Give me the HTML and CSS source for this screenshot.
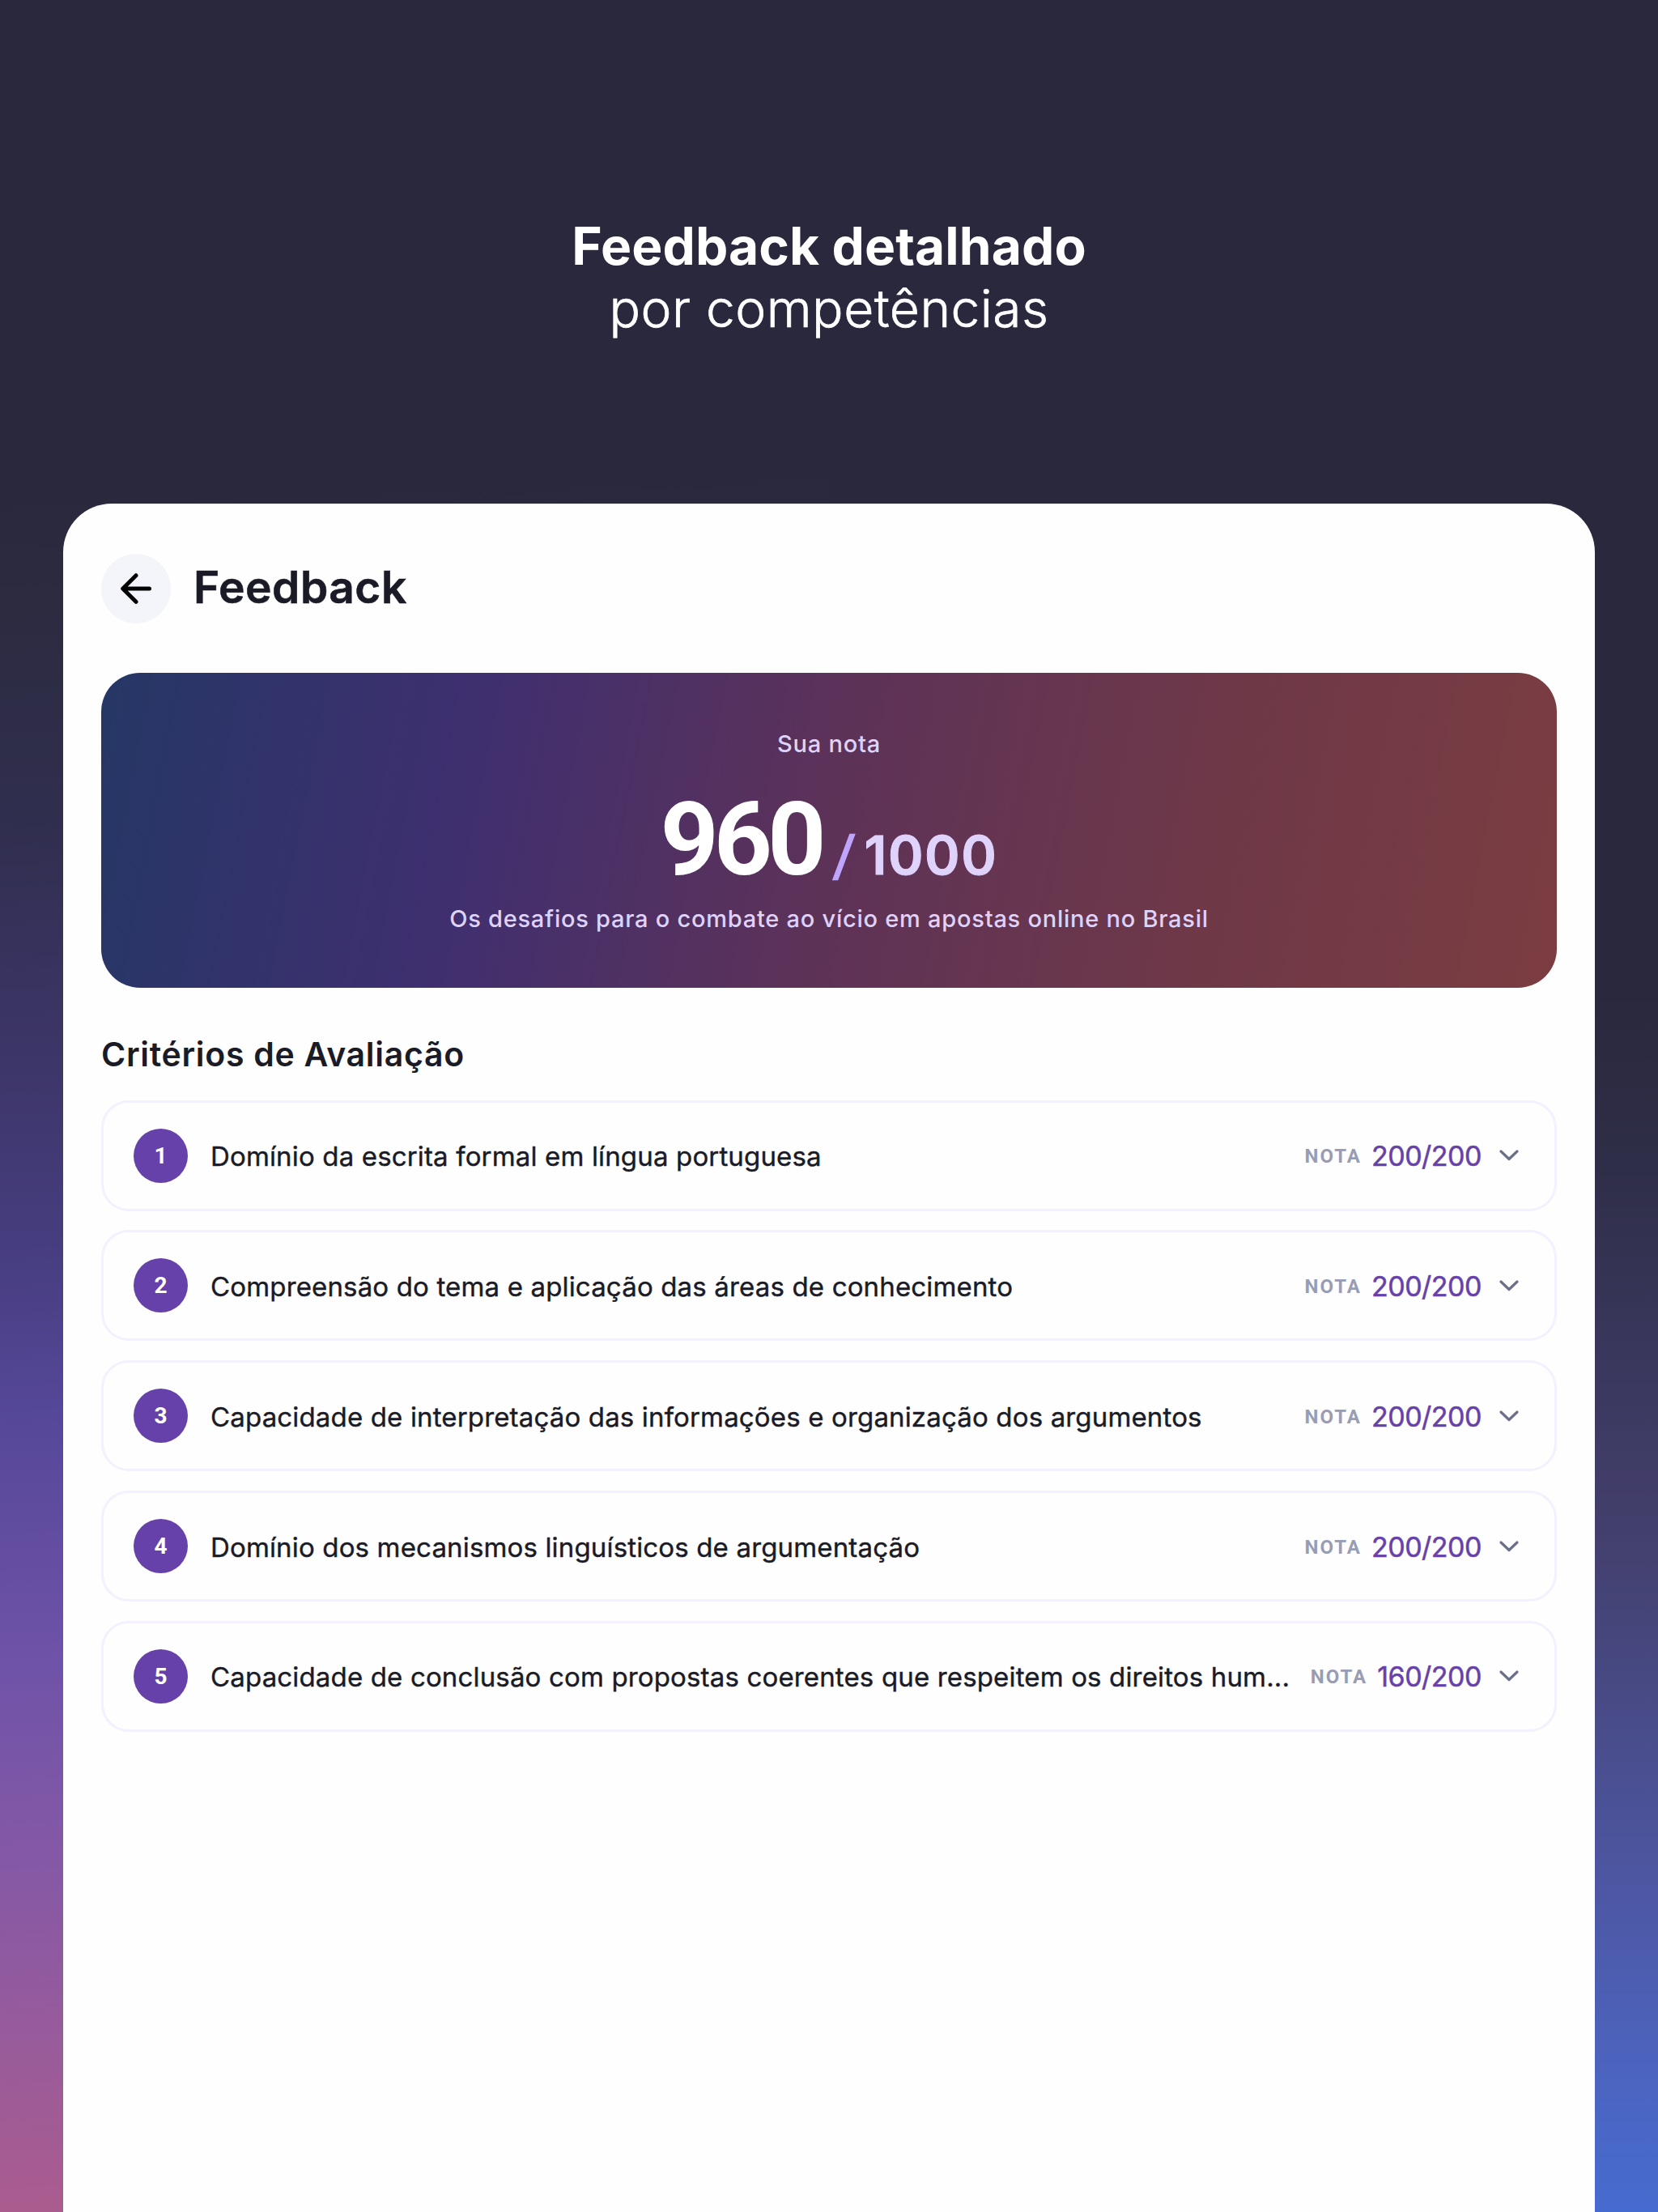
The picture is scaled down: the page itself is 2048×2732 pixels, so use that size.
FILE: index.html
```html
<!DOCTYPE html>
<html lang="pt-BR">
<head>
<meta charset="utf-8">
<title>Feedback</title>
<link rel="stylesheet" href="styles.css">
</head>
<body>
<header class="headline"><strong>Feedback detalhado</strong><span>por competências</span></header>
<main class="sheet">
  <div class="topbar">
    <button class="back" aria-label="Voltar"><svg width="38" height="38" viewBox="0 0 38 38"><path d="M35.5 19H3M19 2.7 2.7 19 19 35.3"/></svg></button>
    <h1>Feedback</h1>
  </div>
  <section class="hero">
    <p class="label">Sua nota</p>
    <div class="score"><b>960</b><i>/</i><span>1000</span></div>
    <p class="theme">Os desafios para o combate ao vício em apostas online no Brasil</p>
  </section>
  <h2>Critérios de Avaliação</h2>
  <div class="list">
    <article class="item"><span class="num">1</span><span class="name">Domínio da escrita formal em língua portuguesa</span><span class="nota">NOTA</span><span class="points">200/200</span><svg class="chev" width="24" height="14" viewBox="0 0 24 14"><path d="M2 2l10 9.5L22 2"/></svg></article>
    <article class="item"><span class="num">2</span><span class="name">Compreensão do tema e aplicação das áreas de conhecimento</span><span class="nota">NOTA</span><span class="points">200/200</span><svg class="chev" width="24" height="14" viewBox="0 0 24 14"><path d="M2 2l10 9.5L22 2"/></svg></article>
    <article class="item"><span class="num">3</span><span class="name">Capacidade de interpretação das informações e organização dos argumentos</span><span class="nota">NOTA</span><span class="points">200/200</span><svg class="chev" width="24" height="14" viewBox="0 0 24 14"><path d="M2 2l10 9.5L22 2"/></svg></article>
    <article class="item"><span class="num">4</span><span class="name">Domínio dos mecanismos linguísticos de argumentação</span><span class="nota">NOTA</span><span class="points">200/200</span><svg class="chev" width="24" height="14" viewBox="0 0 24 14"><path d="M2 2l10 9.5L22 2"/></svg></article>
    <article class="item"><span class="num">5</span><span class="name">Capacidade de conclusão com propostas coerentes que respeitem os direitos hum...</span><span class="nota">NOTA</span><span class="points">160/200</span><svg class="chev" width="24" height="14" viewBox="0 0 24 14"><path d="M2 2l10 9.5L22 2"/></svg></article>
  </div>
</main>
</body>
</html>
```

FILE: styles.css
```css
* { box-sizing: border-box; margin: 0; padding: 0; }
body {
  width: 2048px; height: 2732px; overflow: hidden;
  display: flex; flex-direction: column;
  font-family: Inter, "Liberation Sans", sans-serif; color: #1a1b27;
  background:
    linear-gradient(178deg, #2a283c 22%, #2c2b40 27%, #302e4e 36.5%, #3d3669 47.5%, #463d7f 55.5%, #57489a 63.7%, #6f53a8 74.5%, #8458a6 82.8%, #985b9b 91%, #ad5c8c 100%) left / 50% 100% no-repeat,
    linear-gradient(180deg, #2a283c 44.5%, #2f2e48 52.7%, #39375c 61%, #433f6c 69%, #484b87 77.2%, #4d57a3 85.4%, #4c64bf 93.6%, #466bd0 100%) right / 50% 100% no-repeat;
}
.headline {
  height: 622px; flex: none; padding-top: 265px;
  display: flex; flex-direction: column; align-items: center;
  font-size: 64px; line-height: 77px; color: #fff;
}
.headline strong { font-weight: 700; letter-spacing: .1px; }
.headline span { font-weight: 300; letter-spacing: .5px; -webkit-text-stroke: .7px #fff; }
.sheet {
  flex: 1; margin: 0 78px; padding: 62px 47px 0;
  background: #fefefe; border-radius: 60px 60px 0 0;
}
.topbar { display: flex; align-items: center; gap: 28px; height: 86px; }
.back {
  width: 86px; height: 86px; border: 0; border-radius: 50%; background: #f4f5fa;
  display: flex; align-items: center; justify-content: center;
}
.back path { fill: none; stroke: #000; stroke-width: 5; stroke-linecap: round; stroke-linejoin: round; }
h1 { font-size: 55px; font-weight: 600; line-height: 66px; letter-spacing: .5px; margin-top: -5px; -webkit-text-stroke: .6px #1a1b27; }
.hero {
  margin-top: 61px; height: 389px; padding-top: 70px; border-radius: 48px;
  display: flex; flex-direction: column; align-items: center;
  background: linear-gradient(101deg, #253765, #3f2f70 25.3%, #5d3258 50%, #6e3848 75%, #7b3d41 100%);
  color: #dfd3fb;
}
.label, .theme { font-size: 29px; line-height: 36px; font-weight: 500; letter-spacing: .75px; }
.score { display: flex; align-items: baseline; height: 144px; line-height: 144px; margin-top: 28px; }
.score b { font: 700 126px/144px Roboto, sans-serif; letter-spacing: -6px; color: #fff; }
.score i { font-style: normal; font-size: 66px; font-weight: 600; color: #bfa5fb; margin-left: 16px; transform: skewX(-6deg); }
.score span { font-size: 66px; font-weight: 600; margin-left: 12px; letter-spacing: 1.6px; -webkit-text-stroke: 1px #dfd3fb; }
.theme { margin-top: 8px; }
h2 { margin-top: 57px; font-size: 41px; font-weight: 600; line-height: 50px; letter-spacing: .7px; }
.list { margin-top: 31.7px; display: flex; flex-direction: column; gap: 23.8px; }
.item {
  height: 137px; border: 3px solid #f4f0fe; border-radius: 34px;
  display: flex; align-items: center; padding: 0 44px 0 37px; white-space: nowrap;
}
.num {
  width: 67px; height: 67px; border-radius: 50%; background: #6741aa; color: #fff;
  display: flex; align-items: center; justify-content: center;
  font: 700 28px Roboto, sans-serif;
}
.name { flex: 1; margin-left: 28px; font-size: 33px; font-weight: 400; padding-top: 2px; letter-spacing: .155px; -webkit-text-stroke: .4px #1a1b27; }
.nota { font: 700 24px Roboto, sans-serif; letter-spacing: 2px; color: #989db5; padding-top: 2px; }
.points { margin-left: 12px; font-size: 34px; font-weight: 400; letter-spacing: -.5px; color: #6741aa; padding-top: 1px; -webkit-text-stroke: .5px #6741aa; }
.chev { margin-left: 22px; }
.chev path { fill: none; stroke: #6b7088; stroke-width: 3.2; stroke-linecap: round; stroke-linejoin: round; }
```
